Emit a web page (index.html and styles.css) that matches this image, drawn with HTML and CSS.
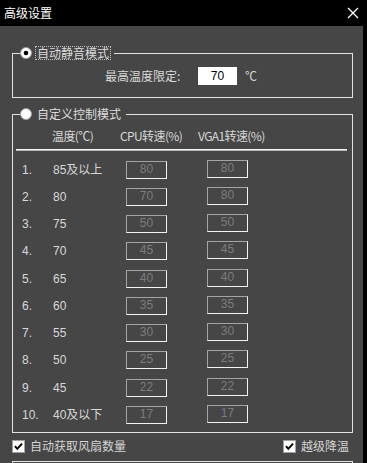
FILE: index.html
```html
<!DOCTYPE html>
<html lang="zh-CN">
<head>
<meta charset="utf-8">
<title>高级设置</title>
<link rel="stylesheet" href="styles.css">
</head>
<body>
<div class="window">
  <div class="titlebar">
    <span class="title">高级设置</span>
    <svg class="close" width="12" height="12" viewBox="0 0 12 12"><path d="M1 1 L11 11 M11 1 L1 11" stroke="#ffffff" stroke-width="1.3" fill="none"/></svg>
  </div>
  <div class="body">
    <fieldset class="group g1">
      <legend class="legend">
        <span class="legend-inner">
          <svg class="radio" width="12" height="12" viewBox="0 0 12 12"><circle cx="6" cy="6" r="5.5" fill="#ffffff" stroke="#9a9a9a" stroke-width="1"/><circle cx="6" cy="6" r="2.3" fill="#000000"/></svg>
          <span class="legend-text focus">自动静音模式</span>
        </span>
      </legend>
      <div class="limit-row">
        <span class="limit-label">最高温度限定:</span>
        <span class="limit-input">70</span>
        <span class="unit">℃</span>
      </div>
    </fieldset>

    <fieldset class="group g2">
      <legend class="legend">
        <span class="legend-inner">
          <svg class="radio" width="12" height="12" viewBox="0 0 12 12"><circle cx="6" cy="6" r="5.5" fill="#ffffff" stroke="#9a9a9a" stroke-width="1"/></svg>
          <span class="legend-text">自定义控制模式</span>
        </span>
      </legend>
      <div class="head">
        <span class="h-temp">温度(℃)</span>
        <span class="h-cpu">CPU转速(%)</span>
        <span class="h-vga">VGA1转速(%)</span>
      </div>
      <div class="rule"></div>
      <div class="rows">
        <div class="row"><span class="num">1.</span><span class="temp">85及以上</span><span class="box">80</span><span class="box box-b">80</span></div>
        <div class="row"><span class="num">2.</span><span class="temp">80</span><span class="box">70</span><span class="box box-b">80</span></div>
        <div class="row"><span class="num">3.</span><span class="temp">75</span><span class="box">50</span><span class="box box-b">50</span></div>
        <div class="row"><span class="num">4.</span><span class="temp">70</span><span class="box">45</span><span class="box box-b">45</span></div>
        <div class="row"><span class="num">5.</span><span class="temp">65</span><span class="box">40</span><span class="box box-b">40</span></div>
        <div class="row"><span class="num">6.</span><span class="temp">60</span><span class="box">35</span><span class="box box-b">35</span></div>
        <div class="row"><span class="num">7.</span><span class="temp">55</span><span class="box">30</span><span class="box box-b">30</span></div>
        <div class="row"><span class="num">8.</span><span class="temp">50</span><span class="box">25</span><span class="box box-b">25</span></div>
        <div class="row"><span class="num">9.</span><span class="temp">45</span><span class="box">22</span><span class="box box-b">22</span></div>
        <div class="row"><span class="num">10.</span><span class="temp">40及以下</span><span class="box">17</span><span class="box box-b">17</span></div>
      </div>
    </fieldset>

    <div class="checks">
      <label class="check">
        <svg class="cb" width="13" height="13" viewBox="0 0 13 13"><rect x="0.5" y="0.5" width="12" height="12" fill="#ffffff" stroke="#a0a0a0"/><path d="M3 6.2 L5.3 8.8 L10 3.6" stroke="#000000" stroke-width="2" fill="none"/></svg>
        <span class="check-text">自动获取风扇数量</span>
      </label>
      <label class="check">
        <svg class="cb" width="13" height="13" viewBox="0 0 13 13"><rect x="0.5" y="0.5" width="12" height="12" fill="#ffffff" stroke="#a0a0a0"/><path d="M3 6.2 L5.3 8.8 L10 3.6" stroke="#000000" stroke-width="2" fill="none"/></svg>
        <span class="check-text">越级降温</span>
      </label>
    </div>
    <div class="group-stub"></div>
  </div>
</div>
</body>
</html>
```

FILE: styles.css
```css
html, body {
  margin: 0;
  padding: 0;
}
body {
  width: 367px;
  height: 463px;
  overflow: hidden;
  background: #464646;
  font-family: "Noto Sans CJK SC", "Liberation Sans", sans-serif;
  font-size: 12px;
  color: #d8d8d8;
}
.window {
  width: 363px;
  height: 463px;
  background: #464646;
  border-right: 4px solid #000000;
  display: flex;
  flex-direction: column;
  overflow: hidden;
}
.titlebar {
  height: 26px;
  flex: none;
  background: #000000;
  display: flex;
  align-items: center;
  justify-content: space-between;
  padding: 0 8px 0 4px;
  margin-right: -4px;
}
.title {
  color: #ffffff;
  font-size: 12px;
  line-height: 14px;
  margin-top: -1px;
}
.close {
  display: block;
  margin-top: -1px;
}
.body {
  padding-left: 12px;
  width: 341px;
}
.group {
  margin: 0;
  padding: 0;
  border: 1px solid #e2e2e2;
  min-width: 0;
}
.g1 {
  margin-top: 20px;
  padding-bottom: 12px;
}
.g2 {
  margin-top: 9px;
  padding-bottom: 3px;
}
.legend {
  margin-left: 7px;
  padding: 0 3px 0 0;
  line-height: 0;
}
.legend-inner {
  display: flex;
  align-items: center;
  height: 14px;
}
.radio {
  display: block;
  margin-right: 3px;
}
.legend-text {
  display: block;
  line-height: 12px;
  padding: 0 1px;
  border: 1px solid transparent;
  color: #dcdcdc;
}
.legend-text.focus {
  border: 1px dotted #bdbdbd;
}
.limit-row {
  display: flex;
  align-items: center;
  padding-top: 7px;
  padding-left: 92px;
  height: 18px;
}
.limit-label {
  width: 93px;
  line-height: 14px;
}
.limit-input {
  width: 39px;
  height: 18px;
  background: #ffffff;
  color: #000000;
  font-family: "Liberation Sans", "Noto Sans CJK SC", sans-serif;
  font-size: 12px;
  line-height: 18px;
  text-align: center;
}
.unit {
  margin-left: 8px;
  line-height: 14px;
}
.head {
  display: flex;
  align-items: center;
  height: 18px;
  padding-top: 6px;
  padding-left: 39px;
  line-height: 14px;
  letter-spacing: -0.6px;
}
.h-temp {
  width: 68px;
}
.h-cpu {
  width: 78px;
}
.rule {
  margin: 4px 5px 0 3px;
  height: 1px;
  background: #f0f0f0;
  border-bottom: 1px solid #bcbcbc;
}
.rows {
  margin-top: 5px;
  padding-left: 9px;
}
.row {
  height: 27.25px;
  display: grid;
  grid-template-columns: 31px 73px 41px 40px 41px;
  align-items: center;
  font-family: "Liberation Sans", "Noto Sans CJK SC", sans-serif;
  line-height: 14px;
}
.num {
  grid-column: 1;
}
.temp {
  grid-column: 2;
}
.box {
  grid-column: 3;
  box-sizing: border-box;
  height: 18px;
  border-style: solid;
  border-width: 1px;
  border-color: #a4a4a4 #f4f4f4 #f4f4f4 #a4a4a4;
  color: #7c7c7c;
  text-align: center;
  line-height: 15px;
  font-size: 12px;
}
.box-b {
  grid-column: 5;
  margin-top: -2px;
}
.checks {
  display: flex;
  justify-content: space-between;
  align-items: center;
  height: 13px;
  margin-top: 7px;
  padding-right: 4px;
}
.check {
  display: flex;
  align-items: center;
}
.cb {
  display: block;
  margin-right: 5px;
}
.check-text {
  line-height: 14px;
  color: #d4d4d4;
}
.group-stub {
  margin-top: 8px;
  height: 20px;
  border: 1px solid #e2e2e2;
  border-bottom: none;
}
```
